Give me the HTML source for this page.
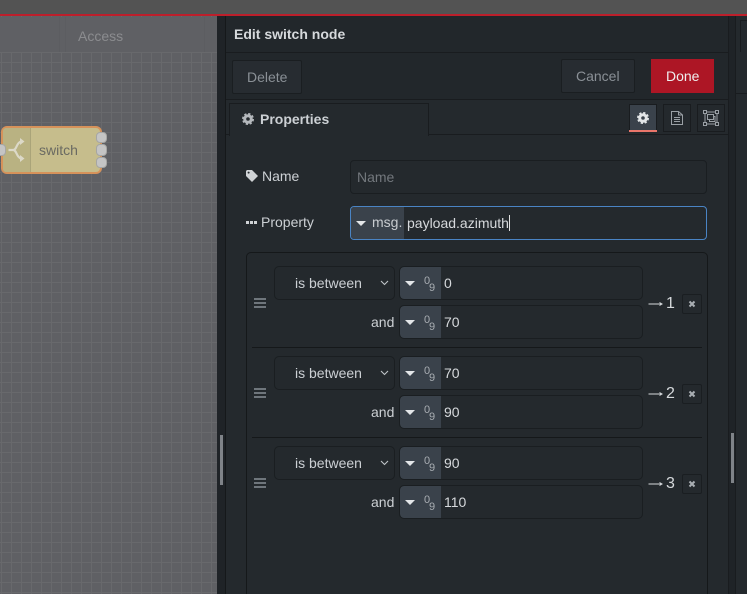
<!DOCTYPE html>
<html><head><meta charset="utf-8">
<style>
html,body{margin:0;padding:0;background:#23282c}
#r{position:relative;width:747px;height:594px;overflow:hidden;background:#24292d;font-family:"Liberation Sans",sans-serif;font-size:14px;color:#ccd0d4}
#r div,#r span.a,#r svg.a{position:absolute;box-sizing:border-box}
.t{white-space:nowrap;line-height:18px}
.sel{left:274px;width:121px;height:34px;border:1px solid #1a1e21;border-radius:5px;background:#24292d}
.inp{left:399px;width:244px;height:34px;border:1px solid #1a1e21;border-radius:5px;background:#24292d;overflow:hidden}
.ty{left:0;top:0;width:41px;height:32px;background:#3a424b;border-radius:4px 0 0 4px}
.tri{width:0;height:0;border-left:5px solid transparent;border-right:5px solid transparent;border-top:5px solid #e3e6e8}
.x{left:682px;width:20px;height:20px;border:1px solid #1a1e21;border-radius:2px;background:#24292d}
.sep{left:252px;width:450px;height:1px;background:#15181a}
.h{left:254px;width:12px;height:2px;background:#6f767c}
.d{font-size:11px;color:#a9aeb3;line-height:11px}
.n{font-size:16px;color:#d6d9dc}
.port{background:#c4c4c4;border:1px solid #a6a6a4;border-radius:4px}
</style></head><body>
<div id="r">
<div style="left:0;top:0;width:747px;height:14px;background:#535353"></div>
<div style="left:0;top:14px;width:747px;height:2px;background:#bd1f2b"></div>

<!-- canvas -->
<div style="left:0;top:16px;width:217px;height:578px;background:#5f6064;background-image:linear-gradient(#68696c 1px,transparent 1px),linear-gradient(90deg,#68696c 1px,transparent 1px);background-size:10px 10px;background-position:1px 6px"></div>
<div style="left:0;top:17px;width:217px;height:35px;background:#5f6064"></div>
<div style="left:59px;top:17px;width:1px;height:35px;background:#5c5d61"></div>
<div style="left:65px;top:17px;width:1px;height:35px;background:#5c5d61"></div>
<div style="left:204px;top:17px;width:1px;height:35px;background:#5c5d61"></div>
<div class="t" style="left:78px;top:27px;color:#8b8c8f">Access</div>

<!-- node -->
<div style="left:1px;top:126px;width:101px;height:48px;background:#c6bd8c;border:2px solid #d6925a;border-radius:6px"></div>
<div style="left:3px;top:128px;width:28px;height:44px;background:#b9b282;border-right:1px solid #aaa479;border-radius:3px 0 0 3px"></div>
<svg class="a" style="left:7px;top:137px" width="18" height="26" viewBox="0 0 18 26"><path d="M1.500 13H6C10 13 9 6 14 4.500M6 13C10 13 9 20 14 21.500" fill="none" stroke="#dcd9c8" stroke-width="2.200"/><path d="M13 1L17.500 4.500 13 8ZM13 18L17.500 21.500 13 25Z" fill="#dcd9c8"/></svg>
<div class="t" style="left:39px;top:141px;color:#6a6a62">switch</div>
<div class="port" style="left:-4px;top:144px;width:10px;height:12px"></div>
<div class="port" style="left:96px;top:132px;width:11px;height:11px"></div>
<div class="port" style="left:96px;top:144px;width:11px;height:12px"></div>
<div class="port" style="left:96px;top:157px;width:11px;height:11px"></div>

<!-- editor tray -->
<div style="left:217px;top:16px;width:8px;height:578px;background:#1f2327"></div>
<div style="left:225px;top:16px;width:1px;height:578px;background:#15181a"></div>
<div style="left:220px;top:435px;width:3px;height:50px;background:#7f8388"></div>
<div style="left:226px;top:16px;width:502px;height:578px;background:#24292d"></div>
<div style="left:226px;top:16px;width:502px;height:36px;background:#22272b"></div>
<div style="left:226px;top:52px;width:502px;height:1px;background:#191c1f"></div>
<div style="left:226px;top:53px;width:502px;height:46px;background:#22272b"></div>
<div style="left:226px;top:99px;width:502px;height:1px;background:#191c1f"></div>
<div class="t" style="left:234px;top:25px;font-weight:bold;color:#d6d9dc">Edit switch node</div>

<div style="left:232px;top:60px;width:70px;height:34px;background:#272c31;border:1px solid #1a1e21;border-radius:2px"></div>
<div class="t" style="left:247px;top:68px;color:#8a9096">Delete</div>
<div style="left:561px;top:59px;width:74px;height:34px;background:#272c31;border:1px solid #1a1e21;border-radius:2px"></div>
<div class="t" style="left:576px;top:67px;color:#8a9096">Cancel</div>
<div style="left:651px;top:59px;width:63px;height:34px;background:#ad1625"></div>
<div class="t" style="left:666px;top:67px;color:#eeeeee">Done</div>

<!-- right strips -->
<div style="left:728px;top:16px;width:8px;height:578px;background:#1f2327;border-left:1px solid #191c1f;border-right:1px solid #191c1f"></div>
<div style="left:736px;top:16px;width:11px;height:578px;background:#24292d"></div>
<div style="left:740px;top:20px;width:7px;height:32px;border-left:1px solid #191c1f;border-top:1px solid #191c1f"></div>
<div style="left:736px;top:93px;width:11px;height:1px;background:#191c1f"></div>
<div style="left:731px;top:433px;width:3px;height:50px;background:#7f8388"></div>

<!-- tabs -->
<div style="left:229px;top:103px;width:200px;height:33px;background:#24292d;border:1px solid #191c1f;border-bottom:0"></div>
<div style="left:429px;top:134px;width:299px;height:1px;background:#191c1f"></div>
<div style="left:226px;top:134px;width:3px;height:1px;background:#191c1f"></div>
<svg class="a" style="left:242px;top:113px" width="12" height="12" viewBox="0 0 12 12"><circle cx="6" cy="6" r="3.300" fill="none" stroke="#b4b8bc" stroke-width="3"/><circle cx="6" cy="6" r="5" fill="none" stroke="#b4b8bc" stroke-width="2" stroke-dasharray="2.200 1.730"/></svg>
<div class="t" style="left:260px;top:110px;font-weight:bold;color:#ccd0d4">Properties</div>

<div style="left:629px;top:104px;width:28px;height:28px;background:#3a424b;border:1px solid #191c1f"></div>
<div style="left:629px;top:130px;width:28px;height:2px;background:#e9756a"></div>
<svg class="a" style="left:637px;top:112px" width="12" height="12" viewBox="0 0 12 12"><circle cx="6" cy="6" r="3.300" fill="none" stroke="#e3e6e8" stroke-width="3"/><circle cx="6" cy="6" r="5" fill="none" stroke="#e3e6e8" stroke-width="2" stroke-dasharray="2.200 1.730"/></svg>
<div style="left:663px;top:104px;width:28px;height:28px;background:#24292d;border:1px solid #191c1f"></div>
<svg class="a" style="left:670px;top:110px" width="14" height="16" viewBox="0 0 14 16"><path d="M1.500 1.500H8.500L12.500 5V14.500H1.500ZM8.500 1.500V5H12.500M4 7.500H10M4 9.500H10M4 11.500H10" fill="none" stroke="#9aa0a5" stroke-width="1"/></svg>
<div style="left:697px;top:104px;width:28px;height:28px;background:#24292d;border:1px solid #191c1f"></div>
<svg class="a" style="left:703px;top:110px" width="16" height="16" viewBox="0 0 16 16"><path d="M2 2H14V14H2ZM4.500 4.500H10.500V9.500H4.500ZM6.500 9.500V11.500H12V6.500H10.500" fill="none" stroke="#9aa0a5" stroke-width="1"/><path d="M.5.5h3v3h-3zM12.500.5h3v3h-3zM.5 12.500h3v3h-3zM12.500 12.500h3v3h-3z" fill="#24292d" stroke="#9aa0a5" stroke-width="1"/></svg>

<!-- name -->
<svg class="a" style="left:246px;top:170px" width="12" height="12" viewBox="0 0 12 12"><path d="M0 1V6L6 12 12 6 6 0H1Z" fill="#d0d3d6"/><circle cx="2.600" cy="2.600" r="1" fill="#24292d"/></svg>
<div class="t" style="left:262px;top:167px">Name</div>
<div style="left:350px;top:160px;width:357px;height:34px;background:#24292d;border:1px solid #1a1e21;border-radius:4px"></div>
<div class="t" style="left:357px;top:168px;color:#73787d">Name</div>

<!-- property -->
<div style="left:246px;top:221px;width:11px;height:3px;background-image:linear-gradient(90deg,#d0d3d6 3px,transparent 3px);background-size:4px 3px"></div>
<div class="t" style="left:261px;top:213px">Property</div>
<div style="left:350px;top:206px;width:357px;height:34px;background:#24292d;border:1px solid #4a84c4;border-radius:4px;overflow:hidden">
  <div style="left:0;top:0;width:53px;height:32px;background:#3a424b"></div>
</div>
<div class="tri" style="left:356px;top:221px"></div>
<div class="t" style="left:372px;top:213px;color:#c8ccd0">msg.</div>
<div class="t" style="left:407px;top:214px;color:#d6d9dc">payload.azimuth</div>
<div style="left:509px;top:215px;width:1px;height:16px;background:#e0e0e0"></div>

<!-- rules container -->
<div style="left:246px;top:252px;width:462px;height:360px;border:1px solid #15181a;border-radius:5px;background:#24292d"></div>
<div class="sep" style="top:347px"></div>
<div class="sep" style="top:437px"></div>

<!-- rule 1 -->
<div class="h" style="top:298px"></div><div class="h" style="top:302px"></div><div class="h" style="top:306px"></div>
<div class="sel" style="top:266px"></div>
<div class="t" style="left:295px;top:274px">is between</div>
<svg class="a" style="left:380px;top:280px" width="9" height="6" viewBox="0 0 9 6"><path d="M1 1L4.500 4.500 8 1" fill="none" stroke="#c0c4c8" stroke-width="1.100"/></svg>
<div class="inp" style="top:266px"><div class="ty"></div></div>
<div class="tri" style="left:405px;top:281px"></div>
<div class="a d" style="left:424px;top:276px">0</div>
<div class="a d" style="left:429px;top:283px">9</div>
<div class="t" style="left:444px;top:274px;color:#d6d9dc">0</div>
<div class="t" style="left:371px;top:313px">and</div>
<div class="inp" style="top:305px"><div class="ty"></div></div>
<div class="tri" style="left:405px;top:320px"></div>
<div class="a d" style="left:424px;top:315px">0</div>
<div class="a d" style="left:429px;top:322px">9</div>
<div class="t" style="left:444px;top:313px;color:#d6d9dc">70</div>
<svg class="a" style="left:648px;top:300px" width="16" height="8" viewBox="0 0 16 8"><path d="M.5 4H14M11.500 2.500L14 4 11.500 5.500" fill="none" stroke="#d6d9dc" stroke-width="1"/></svg>
<div class="t n" style="left:666px;top:295px">1</div>
<div class="x" style="top:294px"></div>
<svg class="a" style="left:688px;top:300px" width="8" height="8" viewBox="0 0 8 8"><path d="M1.500 1.500L6.500 6.500M6.500 1.500L1.500 6.500" stroke="#a9aeb3" stroke-width="2"/></svg>

<!-- rule 2 -->
<div class="h" style="top:388px"></div><div class="h" style="top:392px"></div><div class="h" style="top:396px"></div>
<div class="sel" style="top:356px"></div>
<div class="t" style="left:295px;top:364px">is between</div>
<svg class="a" style="left:380px;top:370px" width="9" height="6" viewBox="0 0 9 6"><path d="M1 1L4.500 4.500 8 1" fill="none" stroke="#c0c4c8" stroke-width="1.100"/></svg>
<div class="inp" style="top:356px"><div class="ty"></div></div>
<div class="tri" style="left:405px;top:371px"></div>
<div class="a d" style="left:424px;top:366px">0</div>
<div class="a d" style="left:429px;top:373px">9</div>
<div class="t" style="left:444px;top:364px;color:#d6d9dc">70</div>
<div class="t" style="left:371px;top:403px">and</div>
<div class="inp" style="top:395px"><div class="ty"></div></div>
<div class="tri" style="left:405px;top:410px"></div>
<div class="a d" style="left:424px;top:405px">0</div>
<div class="a d" style="left:429px;top:412px">9</div>
<div class="t" style="left:444px;top:403px;color:#d6d9dc">90</div>
<svg class="a" style="left:648px;top:390px" width="16" height="8" viewBox="0 0 16 8"><path d="M.5 4H14M11.500 2.500L14 4 11.500 5.500" fill="none" stroke="#d6d9dc" stroke-width="1"/></svg>
<div class="t n" style="left:666px;top:385px">2</div>
<div class="x" style="top:384px"></div>
<svg class="a" style="left:688px;top:390px" width="8" height="8" viewBox="0 0 8 8"><path d="M1.500 1.500L6.500 6.500M6.500 1.500L1.500 6.500" stroke="#a9aeb3" stroke-width="2"/></svg>

<!-- rule 3 -->
<div class="h" style="top:478px"></div><div class="h" style="top:482px"></div><div class="h" style="top:486px"></div>
<div class="sel" style="top:446px"></div>
<div class="t" style="left:295px;top:454px">is between</div>
<svg class="a" style="left:380px;top:460px" width="9" height="6" viewBox="0 0 9 6"><path d="M1 1L4.500 4.500 8 1" fill="none" stroke="#c0c4c8" stroke-width="1.100"/></svg>
<div class="inp" style="top:446px"><div class="ty"></div></div>
<div class="tri" style="left:405px;top:461px"></div>
<div class="a d" style="left:424px;top:456px">0</div>
<div class="a d" style="left:429px;top:463px">9</div>
<div class="t" style="left:444px;top:454px;color:#d6d9dc">90</div>
<div class="t" style="left:371px;top:493px">and</div>
<div class="inp" style="top:485px"><div class="ty"></div></div>
<div class="tri" style="left:405px;top:500px"></div>
<div class="a d" style="left:424px;top:495px">0</div>
<div class="a d" style="left:429px;top:502px">9</div>
<div class="t" style="left:444px;top:493px;color:#d6d9dc">110</div>
<svg class="a" style="left:648px;top:480px" width="16" height="8" viewBox="0 0 16 8"><path d="M.5 4H14M11.500 2.500L14 4 11.500 5.500" fill="none" stroke="#d6d9dc" stroke-width="1"/></svg>
<div class="t n" style="left:666px;top:475px">3</div>
<div class="x" style="top:474px"></div>
<svg class="a" style="left:688px;top:480px" width="8" height="8" viewBox="0 0 8 8"><path d="M1.500 1.500L6.500 6.500M6.500 1.500L1.500 6.500" stroke="#a9aeb3" stroke-width="2"/></svg>
</div>
</body></html>
